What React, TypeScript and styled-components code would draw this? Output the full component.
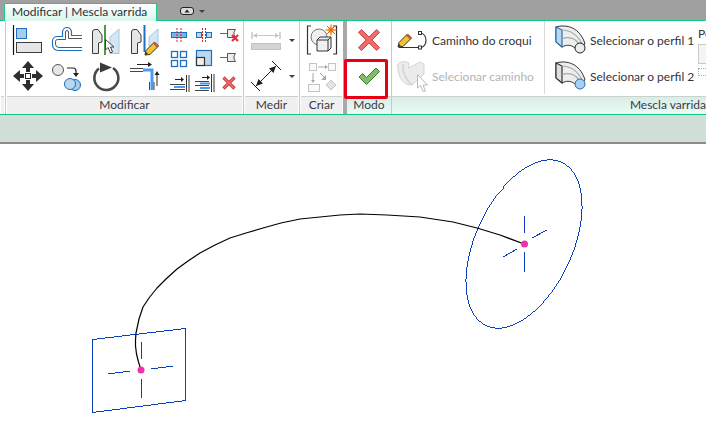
import React from "react"
import styled, { createGlobalStyle } from "styled-components"

const GlobalStyle = createGlobalStyle`
    html, body {
        margin: 0;
        padding: 0;
        background: #ffffff;
        overflow: hidden;
    }
    body {
        font-family: "Lato", "Noto Sans", sans-serif;
        font-size: 12px;
    }
    svg {
        display: block;
    }
`

const Page = styled.div`
    width: 706px;
    height: 423px;
    display: flex;
    flex-direction: column;
    overflow: hidden;
`

const TitleBar = styled.div`
    height: 20px;
    background: #a0a0a0;
    padding-left: 4px;
    display: flex;
    align-items: flex-start;
    flex: none;
`

const Tab = styled.div`
    position: relative;
    z-index: 2;
    box-sizing: border-box;
    width: 153px;
    height: 18px;
    margin-top: 3px;
    border: 1px solid #1ccb85;
    border-bottom: none;
    border-radius: 2px 2px 0 0;
    background: linear-gradient(#ffffff, #d9f6ec);
    color: #303038;
    line-height: 16px;
    padding-left: 7px;
    white-space: nowrap;
`

const QuickToggle = styled.div`
    margin: 7px 0 0 23px;
    display: flex;
    align-items: center;
    gap: 5px;
`

const Ribbon = styled.div`
    display: flex;
    flex: none;
    height: 95px;
    box-sizing: border-box;
    background: #ffffff;
    border-top: 1px solid #14c97f;
    border-bottom: 1px solid #14c97f;
`

const Panel = styled.div<{ $width?: number; $plain?: boolean }>`
    position: relative;
    box-sizing: border-box;
    flex: ${p => (p.$width ? `0 0 ${p.$width}px` : "1 1 0")};
    min-width: 0;
    display: flex;
    flex-direction: column;
    border-right: ${p => (p.$plain ? "none" : "1px solid #c8c8c8")};
`

const PanelBody = styled.div`
    height: 75px;
    flex: none;
    display: flex;
    overflow: hidden;
`

const PanelFooter = styled.div<{ $active?: boolean; $right?: boolean }>`
    flex: 1;
    border-top: 1px solid #c9d2ce;
    margin: ${p => (p.$active ? "0" : "0 1px")};
    background: ${p => (p.$active ? "linear-gradient(#d9ede6, #e8fbf5)" : "#f0f0f0")};
    color: #3a3a48;
    line-height: 16px;
    text-align: ${p => (p.$right ? "right" : "center")};
    white-space: nowrap;
    overflow: hidden;
`

const Divider = styled.div`
    flex: 0 0 4px;
    background: #a8a8a8;
`

const LargeGrid = styled.div`
    display: grid;
    grid-template-columns: repeat(4, 39px);
    grid-template-rows: repeat(2, 36px);
    padding: 1px 0 0 2px;
    justify-items: center;
    align-items: center;
`

const SmallGrid = styled.div`
    display: grid;
    grid-template-columns: repeat(3, 25px);
    grid-template-rows: repeat(3, 24px);
    padding: 2px 0 0 2px;
    justify-items: center;
    align-items: center;
`

const ToolColumn = styled.div`
    display: grid;
    grid-template-rows: repeat(2, 36px);
    padding-top: 1px;
    justify-items: center;
    align-items: center;
    width: 100%;
`

const ToolRow = styled.div`
    display: flex;
    align-items: center;
    gap: 3px;
`

const Caret = styled.span`
    width: 0;
    height: 0;
    border-left: 3px solid transparent;
    border-right: 3px solid transparent;
    border-top: 3px solid #404040;
`

const FlyoutTool = styled.div`
    display: flex;
    align-items: center;
    gap: 7px;
    padding-left: 6px;
    width: 100%;
    box-sizing: border-box;
`

const ActionList = styled.div<{ $width: number }>`
    flex: 0 0 ${p => p.$width}px;
    box-sizing: border-box;
    display: grid;
    grid-template-rows: repeat(2, 36px);
    padding: 1px 0 0 10px;
    height: 73px;
`

const ActionListBordered = styled(ActionList)`
    border-right: 1px solid #d8d8d8;
    padding-left: 4px;
`

const Action = styled.div<{ $disabled?: boolean }>`
    display: flex;
    align-items: center;
    gap: 4px;
    white-space: nowrap;
    color: ${p => (p.$disabled ? "#b4b4b4" : "#33333d")};
`

const ClippedOptions = styled.div`
    padding: 6px 0 0 2px;
    color: #33333d;
    white-space: nowrap;
    line-height: 14px;
`

const OptionBox = styled.div`
    width: 20px;
    height: 20px;
    margin-top: 3px;
    box-sizing: border-box;
    border: 1px solid #c8c8c8;
    background: #f4f4f4;
`

const OptionDashed = styled.div`
    width: 20px;
    height: 8px;
    margin-top: 4px;
    box-sizing: border-box;
    border: 1px dotted #b0b0b0;
`

const ConfirmFrame = styled.div`
    position: absolute;
    left: -3px;
    top: 38px;
    width: 44px;
    height: 40px;
    box-sizing: border-box;
    border: 3px solid #ea0016;
    border-radius: 2px;
`

const StatusStrip = styled.div`
    flex: none;
    height: 27px;
    background: #d0e0d8;
    border-bottom: 2px solid #8c8c8c;
`

const Canvas = styled.div`
    flex: 1;
    background: #ffffff;
`

const DARK = "#3c3c3c"
const GRAY = "#e4e6e8"
const BLUE = "#1e6fc0"

const SWEEP_PATH = [
    [141, 370], [138.5, 362], [136.5, 354], [135.5, 346], [135.5, 340], [136, 333], [139, 319], [143, 307],
    [149, 298], [157, 288], [166, 279], [177, 269], [188, 261], [200, 253], [215, 245], [230, 238], [246, 233],
    [263, 228], [281, 223], [300, 219], [320, 217], [340, 215], [360, 214], [387, 215], [420, 217], [453, 222],
    [477, 228], [500, 235], [524, 244],
]
    .map(p => p.join(","))
    .join(" ")

const Icon: React.FC<{ size?: number; children: React.ReactNode }> = ({ size = 32, children }) => (
    <svg width={size} height={size} viewBox={`0 0 ${size} ${size}`} fill="none">
        {children}
    </svg>
)

const DoorLeft = () => (
    <path d="M2.5 8 Q2.5 5.5 5 5.5 H8 L12 11 V18 L8.5 19 V29.5 H2.5 Z" fill={GRAY} stroke={DARK} strokeWidth="1" />
)

const Pointer = ({ x, y }: { x: number; y: number }) => (
    <path
        transform={`translate(${x} ${y})`}
        d="M0.5 0.5 V11 L3 8.5 L5.5 14 L7.5 13 L5.5 8 H9 Z"
        fill="#ffffff"
        stroke="#404040"
        strokeWidth="1"
    />
)

const PencilTip = ({ x, y }: { x: number; y: number }) => (
    <g transform={`translate(${x} ${y})`}>
        <path d="M1 14 L2 9.5 L10.5 1 L14.5 5 L6 13.5 Z" fill="#f4c430" stroke="#3c3020" strokeWidth="1" />
        <path d="M10.5 1 L14.5 5 L13 6.5 L9 2.5 Z" fill="#c05a30" />
        <path d="M1 14 L2 11 L4 13 Z" fill="#303030" />
    </g>
)

const AlignIcon = () => (
    <Icon>
        <path d="M1.5 1 V31" stroke="#111" strokeWidth="1.2" />
        <rect x="4.5" y="4.5" width="10" height="10" fill="#a8cce8" stroke={BLUE} />
        <rect x="4.5" y="18.5" width="25" height="10" fill={GRAY} stroke={DARK} />
    </Icon>
)

const OffsetIcon = () => (
    <Icon>
        <path
            d="M31 11.5 H20.5 V8 a4.5 4.5 0 0 0 -9 0 V12.5 H6 a4.5 4.5 0 0 0 -4.5 4.5 V21 a5.5 5.5 0 0 0 5.5 5.5 H31"
            stroke={BLUE}
            strokeWidth="1.2"
        />
        <path
            d="M31 14.5 H17.5 V8 a1.5 1.5 0 0 0 -3 0 V15.5 H6.5 a2 2 0 0 0 -2 2 V20 a3.5 3.5 0 0 0 3.5 3.5 H31"
            stroke="#555"
            strokeWidth="1"
        />
    </Icon>
)

const MirrorPickIcon = () => (
    <Icon>
        <DoorLeft />
        <path d="M15 1 V31" stroke="#4f9d3e" strokeWidth="2" />
        <path d="M20 13 L29 5 V29.5 H20 Z" fill="#d4e6f4" stroke="#a9c8de" />
        <Pointer x={15} y={15} />
    </Icon>
)

const MirrorDrawIcon = () => (
    <Icon>
        <DoorLeft />
        <path d="M15.5 1 V28" stroke={BLUE} strokeWidth="2" />
        <path d="M20 13 L29 5 V22 H20 Z" fill="#d4e6f4" stroke="#a9c8de" />
        <PencilTip x={15} y={17} />
    </Icon>
)

const MoveIcon = () => (
    <Icon>
        <g fill="#2e2e2e">
            <path d="M16 1 L22 8 H18 V12 H14 V8 H10 Z" />
            <path d="M16 31 L22 24 H18 V20 H14 V24 H10 Z" />
            <path d="M1 16 L8 10 V14 H12 V18 H8 V22 Z" />
            <path d="M31 16 L24 10 V14 H20 V18 H24 V22 Z" />
        </g>
        <rect x="13.5" y="13.5" width="5" height="5" fill="#fff" stroke="#222" />
    </Icon>
)

const CopyIcon = () => (
    <Icon>
        <circle cx="7" cy="10" r="5.5" fill={GRAY} stroke="#555" />
        <path d="M16 8 H22 a3 3 0 0 1 3 3 V15" stroke="#222" strokeWidth="1.2" />
        <path d="M22 13 H28 L25 17 Z" fill="#222" />
        <circle cx="24" cy="25" r="5.5" fill="#a9cbe6" stroke={BLUE} />
        <circle cx="19" cy="24" r="5.5" fill="#bcd8ee" stroke={BLUE} />
    </Icon>
)

const RotateIcon = () => (
    <Icon>
        <path d="M9 8.5 A12 12 0 1 0 23 8" stroke="#4a4a4a" strokeWidth="2.6" />
        <path d="M10 2.5 L22 7.5 L10 12.5 Z" fill="#3a3a3a" />
    </Icon>
)

const TrimIcon = () => (
    <Icon>
        <path d="M8 4.5 H20" stroke="#222" />
        <path d="M19 2 L23 4.5 L19 7 Z" fill="#222" />
        <path d="M1 8.5 H14 M1 11.5 H14" stroke="#444" />
        <path d="M14 10 H23 V30" stroke="#4a9cf0" strokeWidth="3" />
        <path d="M20.5 30 V22 M25 30 V22" stroke="#444" />
        <path d="M28 26 V14" stroke="#222" />
        <path d="M25.5 15 L28 11 L30.5 15 Z" fill="#222" />
    </Icon>
)

const SmallIcon: React.FC<{ children: React.ReactNode }> = ({ children }) => <Icon size={24}>{children}</Icon>

const SplitBarIcon = () => (
    <SmallIcon>
        <rect x="4.5" y="9.5" width="15" height="5" fill="#7fb2e0" stroke={BLUE} />
        <path d="M10 5 V19 M14 5 V19" stroke="#d8202a" strokeDasharray="2 1" />
    </SmallIcon>
)

const SplitGapIcon = () => (
    <SmallIcon>
        <rect x="4.5" y="9.5" width="5" height="5" fill="#bcd8ee" stroke={BLUE} />
        <rect x="14.5" y="9.5" width="5" height="5" fill="#bcd8ee" stroke={BLUE} />
        <path d="M10.5 5 V19 M13.5 5 V19" stroke="#d8202a" strokeDasharray="2 1" />
    </SmallIcon>
)

const ArrayIcon = () => (
    <SmallIcon>
        <rect x="4.5" y="4.5" width="6" height="6" stroke={BLUE} strokeWidth="1.3" />
        <rect x="13.5" y="4.5" width="6" height="6" stroke={BLUE} strokeWidth="1.3" />
        <rect x="4.5" y="13.5" width="6" height="6" stroke={BLUE} strokeWidth="1.3" />
        <rect x="13.5" y="13.5" width="6" height="6" stroke={BLUE} strokeWidth="1.3" />
    </SmallIcon>
)

const ScaleIcon = () => (
    <SmallIcon>
        <rect x="4.5" y="3.5" width="15" height="15" fill="#bcd8ee" stroke={BLUE} strokeWidth="1.2" />
        <rect x="4.5" y="10.5" width="8" height="8" fill="#eeeeee" stroke="#333" strokeWidth="1.2" />
    </SmallIcon>
)

const Pin = () => (
    <>
        <path d="M3 10.5 H10" stroke="#666" />
        <path d="M10.5 6.5 H18.5 L17 9 V12 L18.5 14.5 H10.5 Z" fill="#ececec" stroke="#555" />
    </>
)

const UnpinIcon = () => (
    <SmallIcon>
        <Pin />
        <path d="M15 12 L21 18 M21 12 L15 18" stroke="#e0303a" strokeWidth="2.2" />
    </SmallIcon>
)

const PinIcon = () => (
    <SmallIcon>
        <Pin />
    </SmallIcon>
)

const TrimSingleIcon = () => (
    <SmallIcon>
        <path d="M8 8.5 H15" stroke="#222" />
        <path d="M14 6 L17 8.5 L14 11 Z" fill="#222" />
        <path d="M3 13.5 H18 M3 18.5 H18" stroke="#444" />
        <path d="M7 16 H18" stroke="#4a9cf0" strokeWidth="2" />
        <path d="M19.5 4 V21 M22 4 V21" stroke="#333" />
    </SmallIcon>
)

const TrimMultiIcon = () => (
    <SmallIcon>
        <path d="M10 6.5 H16" stroke="#222" />
        <path d="M15 4 L18 6.5 L15 9 Z" fill="#222" />
        <path d="M3 10.5 H17 M3 14.5 H17 M3 19.5 H17" stroke="#444" />
        <path d="M8 12.5 H18 M8 17 H18" stroke="#4a9cf0" strokeWidth="2" />
        <path d="M19.5 3 V21 M22 3 V21" stroke="#333" />
    </SmallIcon>
)

const CrossShape = ({ scale }: { scale: number }) => (
    <g transform={`scale(${scale})`}>
        <path
            d="M5.5 3 L12 9.5 L18.5 3 L21 5.5 L14.5 12 L21 18.5 L18.5 21 L12 14.5 L5.5 21 L3 18.5 L9.5 12 L3 5.5 Z"
            fill="#f26a6a"
            stroke="#c74545"
            strokeWidth={1 / scale}
        />
    </g>
)

const DeleteSmallIcon = () => (
    <SmallIcon>
        <g transform="translate(4 4)">
            <CrossShape scale={0.667} />
        </g>
    </SmallIcon>
)

const CancelIcon = () => (
    <Icon size={28}>
        <CrossShape scale={1.167} />
    </Icon>
)

const CheckIcon = () => (
    <Icon size={24}>
        <path d="M2 13 L5.5 9.5 L9.5 13.5 L19 4 L22.5 7.5 L9.5 20.5 Z" fill="#84bc68" stroke="#3f7d2c" />
    </Icon>
)

const DimensionIcon = () => (
    <Icon>
        <path d="M2 8 V15 M30 8 V15" stroke="#c8c8c8" strokeWidth="1.5" />
        <path d="M3 11.5 H29" stroke="#c8c8c8" />
        <path d="M3 11.5 L7 9 V14 Z M29 11.5 L25 9 V14 Z" fill="#c8c8c8" />
        <rect x="1.5" y="19.5" width="29" height="6" fill="#d4d4d4" stroke="#c4c4c4" />
    </Icon>
)

const MeasureIcon = () => (
    <Icon>
        <path d="M22 1 L31 10 M1 22 L10 31" stroke="#222" strokeWidth="1" />
        <path d="M6 26 L26 6" stroke="#222" strokeWidth="1" />
        <path d="M26 6 L23.5 13 L19 8.5 Z M6 26 L8.5 19 L13 23.5 Z" fill="#222" />
    </Icon>
)

const MassIcon = () => (
    <Icon>
        <path d="M5 2 H1.5 V30 H5 M27 2 H30.5 V30 H27" stroke="#333" strokeWidth="1.2" />
        <circle cx="13" cy="13" r="8" fill="#f0f0f0" stroke="#777" />
        <path d="M11 16 L14 13 H25 V24 L22 27 H11 Z" fill="#eef1f4" stroke="#333" />
        <path d="M11 16 H22 V27 M22 16 L25 13" stroke="#333" />
        <circle cx="25" cy="6" r="3" fill="#f4d020" />
        <path d="M25 0.5 V11.5 M19.5 6 H30.5 M21 2 L29 10 M29 2 L21 10" stroke="#e25a18" strokeWidth="1" />
    </Icon>
)

const FormCreateIcon = () => (
    <Icon>
        <g stroke="#c4c4c4" fill="#fafafa">
            <rect x="3.5" y="3.5" width="7" height="7" />
            <rect x="22.5" y="3.5" width="7" height="7" />
            <rect x="2.5" y="24.5" width="11" height="7" />
            <path d="M25 20 L30 25 L25 30 L20 25 Z" fill="#e4e4e4" />
        </g>
        <path d="M12 7 H20 M7 13 V21 M14 13 L19 18" stroke="#a8a8a8" />
        <path d="M19 5 L22 7 L19 9 Z M5 20 L7 23 L9 20 Z M20 15 V20 H15 Z" fill="#a8a8a8" />
    </Icon>
)

const SketchPathIcon = () => (
    <Icon>
        <path d="M3 23.5 H24 C32 23.5 32 9 24 9" stroke="#333" strokeWidth="1.2" />
        <rect x="22.5" y="7.5" width="3" height="3" fill="#fff" stroke="#333" />
        <rect x="22.5" y="22" width="3" height="3" fill="#fff" stroke="#333" />
        <PencilTip x={1} y={9} />
    </Icon>
)

const PickPathIcon = () => (
    <Icon>
        <path
            d="M1.5 5 C4 1 10 1 13 3 L12.5 8 L24 2 L28 4 V14 L16 25 C8 26 2 18 1.5 5 Z"
            fill="#ececec"
            stroke="#d4d4d4"
        />
        <path d="M7 4 C6 12 10 20 16 25" stroke="#d8d8d8" strokeWidth="2" />
        <path
            transform="translate(21 14)"
            d="M0.5 0.5 V14 L3.5 11.5 L6.5 18 L8.5 17 L6 11 H10.5 Z"
            fill="#ffffff"
            stroke="#b8b8b8"
        />
    </Icon>
)

const ProfileIcon: React.FC<{ face: string; edge: string; dot: string; dotEdge: string }> = ({
    face,
    edge,
    dot,
    dotEdge,
}) => (
    <Icon>
        <path d="M1 3 C11 0 25 3 30 20 L24 24 H20 C15 20 11 21 7 23 L1 18 Z" fill="#eeeeee" stroke="#333" />
        <path d="M1 3 L7 6 V23 L1 18 Z" fill={face} stroke={edge} strokeWidth="1.2" />
        <path d="M7 6 C15 6 23 11 27 20 M7 15 C13 12 20 14 24 20" stroke="#a8a8a8" strokeWidth="1.2" />
        <circle cx="25" cy="24" r="5" fill={dot} stroke={dotEdge} strokeWidth="1" />
    </Icon>
)

const App: React.FC = () => {
    return (
        <Page>
            <GlobalStyle />
            <TitleBar>
                <Tab>Modificar | Mescla varrida</Tab>
                <QuickToggle>
                    <svg width="14" height="8" viewBox="0 0 14 8" fill="none">
                        <rect x="0.5" y="0.5" width="13" height="7" rx="2.5" fill="#dcdcdc" stroke="#222" />
                        <path d="M4.5 5.5 L7 2.5 L9.5 5.5 Z" fill="#222" />
                    </svg>
                    <Caret />
                </QuickToggle>
            </TitleBar>

            <Ribbon>
                <Panel $width={6}>
                    <PanelBody />
                    <PanelFooter />
                </Panel>

                <Panel $width={238}>
                    <PanelBody>
                        <LargeGrid>
                            <AlignIcon />
                            <OffsetIcon />
                            <MirrorPickIcon />
                            <MirrorDrawIcon />
                            <MoveIcon />
                            <CopyIcon />
                            <RotateIcon />
                            <TrimIcon />
                        </LargeGrid>
                        <SmallGrid>
                            <SplitBarIcon />
                            <SplitGapIcon />
                            <UnpinIcon />
                            <ArrayIcon />
                            <ScaleIcon />
                            <PinIcon />
                            <TrimSingleIcon />
                            <TrimMultiIcon />
                            <DeleteSmallIcon />
                        </SmallGrid>
                    </PanelBody>
                    <PanelFooter>Modificar</PanelFooter>
                </Panel>

                <Panel $width={56}>
                    <PanelBody>
                        <ToolColumn>
                            <FlyoutTool>
                                <DimensionIcon />
                                <Caret />
                            </FlyoutTool>
                            <FlyoutTool>
                                <MeasureIcon />
                                <Caret />
                            </FlyoutTool>
                        </ToolColumn>
                    </PanelBody>
                    <PanelFooter>Medir</PanelFooter>
                </Panel>

                <Panel $width={43} $plain>
                    <PanelBody>
                        <ToolColumn>
                            <MassIcon />
                            <FormCreateIcon />
                        </ToolColumn>
                    </PanelBody>
                    <PanelFooter>Criar</PanelFooter>
                </Panel>

                <Divider />

                <Panel $width={45}>
                    <PanelBody>
                        <ToolColumn>
                            <CancelIcon />
                            <CheckIcon />
                        </ToolColumn>
                    </PanelBody>
                    <PanelFooter $active>Modo</PanelFooter>
                    <ConfirmFrame />
                </Panel>

                <Panel $plain>
                    <PanelBody>
                        <ActionListBordered $width={153}>
                            <Action>
                                <SketchPathIcon />
                                Caminho do croqui
                            </Action>
                            <Action $disabled>
                                <PickPathIcon />
                                Selecionar caminho
                            </Action>
                        </ActionListBordered>
                        <ActionList $width={151}>
                            <ToolRow>
                                <ProfileIcon face="#bcd8ee" edge={BLUE} dot="#ececec" dotEdge="#222" />
                                <Action>Selecionar o perfil 1</Action>
                            </ToolRow>
                            <ToolRow>
                                <ProfileIcon face="#e0e0e0" edge="#333" dot="#a9cfee" dotEdge={BLUE} />
                                <Action>Selecionar o perfil 2</Action>
                            </ToolRow>
                        </ActionList>
                        <ClippedOptions>
                            Perfil
                            <OptionBox />
                            <OptionDashed />
                        </ClippedOptions>
                    </PanelBody>
                    <PanelFooter $active $right>
                        Mescla varrida
                    </PanelFooter>
                </Panel>
            </Ribbon>

            <StatusStrip />

            <Canvas>
                <svg width="706" height="279" viewBox="0 144 706 279" fill="none">
                    <g stroke="#0a3fc0" strokeWidth="1" shapeRendering="crispEdges">
                        <path d="M92.5 339.5 L185.5 328.5 V400.5 L92.5 412.5 Z" />
                        <path d="M141.5 342 V359 M141.5 379 V398" />
                        <path d="M108 374 L130 371 M151 369 L173 366" />
                        <ellipse cx="524" cy="244" rx="48.5" ry="90" transform="rotate(24.9 524 244)" />
                        <path d="M524.5 216 V233 M524.5 252 V272" />
                        <path d="M532 238 L547 230 M503 257 L517 249" />
                    </g>
                    <polyline points={SWEEP_PATH} stroke="#000000" strokeWidth="1.2" strokeLinejoin="round" />
                    <circle cx="141" cy="370" r="3.5" fill="#f030b0" />
                    <circle cx="524.5" cy="244" r="3.5" fill="#f030b0" />
                </svg>
            </Canvas>
        </Page>
    )
}

export default App
